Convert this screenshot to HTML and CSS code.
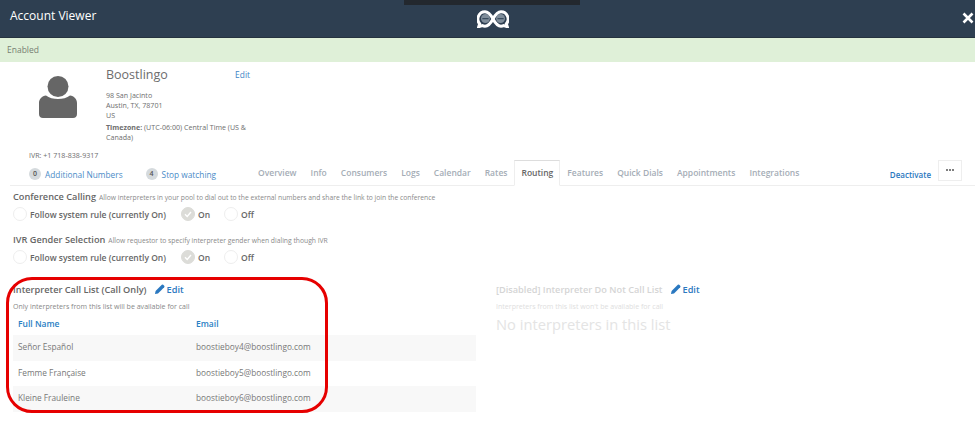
FILE: index.html
```html
<!DOCTYPE html>
<html lang="en">
<head>
<meta charset="utf-8">
<title>Account Viewer</title>
<link rel="stylesheet" href="styles.css">
</head>
<body>
<div class="blackbar"></div>
<header class="topbar">
  <div class="title">Account Viewer</div>
  <svg class="logo" viewBox="0 1 36 20" width="32" height="18" preserveAspectRatio="none" aria-hidden="true">
    <circle cx="9.500" cy="10.500" r="5" fill="#7f8d9a"/>
    <circle cx="26.500" cy="10.500" r="5" fill="#7f8d9a"/>
    <path d="M6 10.500h7M23 10.500h7" stroke="#3b4d5e" stroke-width="1.300"/>
    <path d="M18 11C15 5.500 12.500 3 9 3a8 8 0 0 0-6 13.300L2 19.500l4-1.200C7 18.800 8 19 9 19c3.500 0 6-2.500 9-8s5.500-8 9-8a8 8 0 0 1 6 13.300l1 3.200-4-1.200c-1 .5-2 .7-3 .7-3.500 0-6-2.500-9-8z" fill="none" stroke="#fff" stroke-width="3.400"/>
  </svg>
  <svg class="close" viewBox="0 0 12 12" width="12" height="12" aria-hidden="true"><path d="M1.500 1.500l9 9M10.500 1.500l-9 9" stroke="#fff" stroke-width="2.600"/></svg>
</header>
<div class="status">Enabled</div>
<section class="profile">
  <svg class="avatar" viewBox="0 0 38 42" width="38" height="42" aria-hidden="true">
    <circle cx="19" cy="10.500" r="10.500" fill="#666"/>
    <path d="M7 19.500c3 2.500 7.500 3.500 12 3.500s9-1 12-3.500c4 .5 7 3.500 7 7.500v11c0 2.500-1.500 4-4 4H4c-2.500 0-4-1.500-4-4V27c0-4 3-7 7-7.500z" fill="#666"/>
  </svg>
  <div class="details">
    <div class="name-row"><h1 class="name">Boostlingo</h1><a class="edit-small">Edit</a></div>
    <address class="address">98 San Jacinto<br>Austin, TX, 78701<br>US</address>
    <p class="timezone"><b>Timezone:</b> (UTC-06:00) Central Time (US &amp; Canada)</p>
  </div>
</section>
<div class="ivr">IVR: +1 718-838-9317</div>
<nav class="navrow">
  <div class="links">
    <a class="count-link"><span class="badge">0</span>Additional Numbers</a>
    <a class="count-link"><span class="badge">4</span>Stop watching</a>
  </div>
  <div class="tabs">
    <span class="tab">Overview</span><span class="tab">Info</span><span class="tab">Consumers</span><span class="tab">Logs</span><span class="tab">Calendar</span><span class="tab">Rates</span><span class="tab active">Routing</span><span class="tab">Features</span><span class="tab">Quick Dials</span><span class="tab">Appointments</span><span class="tab">Integrations</span>
  </div>
  <div class="actions"><a class="deactivate">Deactivate</a><span class="more"><svg viewBox="0 0 8 2" width="8" height="2" aria-hidden="true"><circle cx="1" cy="1" r="1" fill="#555"/><circle cx="4" cy="1" r="1" fill="#555"/><circle cx="7" cy="1" r="1" fill="#555"/></svg></span></div>
</nav>
<main class="content">
  <section class="setting">
    <div class="setting-head"><h2>Conference Calling</h2><span>Allow interpreters in your pool to dial out to the external numbers and share the link to join the conference</span></div>
    <div class="options">
      <label class="opt opt-rule"><i class="radio"></i>Follow system rule (currently On)</label>
      <label class="opt opt-on"><i class="radio checked"><svg viewBox="0 0 10 10" width="10" height="10"><path d="M2 5.200l2.200 2.200L8 3" fill="none" stroke="#fff" stroke-width="1.400"/></svg></i>On</label>
      <label class="opt"><i class="radio"></i>Off</label>
    </div>
  </section>
  <section class="setting second">
    <div class="setting-head"><h2>IVR Gender Selection</h2><span>Allow requestor to specify interpreter gender when dialing though IVR</span></div>
    <div class="options">
      <label class="opt opt-rule"><i class="radio"></i>Follow system rule (currently On)</label>
      <label class="opt opt-on"><i class="radio checked"><svg viewBox="0 0 10 10" width="10" height="10"><path d="M2 5.200l2.200 2.200L8 3" fill="none" stroke="#fff" stroke-width="1.400"/></svg></i>On</label>
      <label class="opt"><i class="radio"></i>Off</label>
    </div>
  </section>
  <div class="lists">
    <section class="list-call">
      <div class="highlight"></div>
      <div class="list-head"><h3>Interpreter Call List (Call Only)</h3><a class="edit"><svg viewBox="0 0 10 10" width="10" height="10"><path d="M0 10l.6-3L6.800.800a1 1 0 0 1 1.400 0l1 1a1 1 0 0 1 0 1.400L3 9.400z" fill="#2a78c0"/></svg>Edit</a></div>
      <p class="hint">Only interpreters from this list will be available for call</p>
      <table>
        <thead><tr><th class="col-name">Full Name</th><th>Email</th></tr></thead>
        <tbody>
          <tr><td>Señor Español</td><td>boostieboy4@boostlingo.com</td></tr>
          <tr><td>Femme Française</td><td>boostieboy5@boostlingo.com</td></tr>
          <tr><td>Kleine Frauleine</td><td>boostieboy6@boostlingo.com</td></tr>
        </tbody>
      </table>
    </section>
    <section class="list-disabled">
      <div class="list-head"><h3>[Disabled] Interpreter Do Not Call List</h3><a class="edit"><svg viewBox="0 0 10 10" width="10" height="10"><path d="M0 10l.6-3L6.800.800a1 1 0 0 1 1.400 0l1 1a1 1 0 0 1 0 1.400L3 9.400z" fill="#2a78c0"/></svg>Edit</a></div>
      <p class="hint">Interpreters from this list won't be available for call</p>
      <p class="empty">No interpreters in this list</p>
    </section>
  </div>
</main>
</body>
</html>
```
FILE: styles.css
```css
* { box-sizing: border-box; }
html, body { margin: 0; padding: 0; }
body {
  position: relative;
  width: 975px;
  height: 425px;
  overflow: hidden;
  background: #fff;
  font-family: "Open Sans", sans-serif;
  color: #666;
}
a { color: #3d85c6; }
.blackbar {
  position: absolute;
  left: 404px;
  top: 0;
  width: 176px;
  height: 5px;
  background: #23282e;
}
.topbar {
  display: grid;
  grid-template-columns: 1fr auto 1fr;
  align-items: center;
  height: 38px;
  padding: 0 0 0 10px;
  background: #2e3f51;
  border-bottom: 1px solid #26333f;
}
.title { color: #fff; font-size: 12px; font-weight: 500; line-height: 30px; margin-top: -6px; }
.logo { margin-top: 0; }
.close { justify-self: end; margin: -1px 0 0; transform: translateX(-1px); }
.status {
  height: 24px;
  padding-left: 7px;
  background: #dff0d8;
  color: #777f72;
  font-size: 8.500px;
  line-height: 24px;
}
.profile { display: flex; height: 84px; padding-left: 39px; }
.avatar { margin-top: 14px; flex: none; }
.details { width: 146px; margin-left: 29px; padding-top: 4px; }
.name-row { display: flex; justify-content: space-between; align-items: center; height: 16px; }
.name { margin: 0; font-size: 12.500px; font-weight: 500; color: #6d6d6d; }
.edit-small { font-size: 8.400px; margin-right: 2px; }
.address { margin-top: 8px; font-style: normal; font-size: 7.100px; line-height: 10px; color: #6e6e6e; }
.timezone { margin: 2px 0 0; font-size: 7.100px; line-height: 10px; color: #6e6e6e; }
.timezone b { font-weight: 700; }
.ivr { height: 11px; margin-top: 4px; padding-left: 29px; font-size: 7.100px; line-height: 11px; color: #6e6e6e; }
.navrow {
  display: flex;
  align-items: stretch;
  height: 25px;
  margin: 0 0 0 10px;
  padding-left: 19px;
  border-bottom: 1px solid #eee;
}
.links { display: flex; flex: none; width: 222px; gap: 23px; align-items: center; padding-top: 2px; }
.count-link { display: flex; align-items: center; font-size: 8.300px; color: #4a8bc7; white-space: nowrap; }
.badge {
  display: block;
  width: 12px;
  height: 12px;
  margin-right: 4px;
  border-radius: 50%;
  background: #d5dadd;
  color: #555;
  font-size: 7px;
  font-weight: 600;
  line-height: 12px;
  text-align: center;
}
.tabs { display: flex; align-items: stretch; }
.tab { padding: 4px 7px 0; font-size: 8.500px; font-weight: 600; color: #a5adb6; line-height: 16px; }
.tab.active {
  margin: -1px 0 -1px;
  padding: 4px 6px 0;
  background: #fff;
  color: #666;
  border: 1px solid #eee;
  border-bottom: 1px solid #fff;
  border-top-color: #ddd;
}
.actions { display: flex; flex: none; align-items: flex-start; margin-left: auto; padding-right: 13px; }
.deactivate { font-size: 8px; font-weight: 600; line-height: 11px; color: #2a78c0; margin: 8px 7px 0 0; }
.more {
  display: flex;
  flex: none;
  align-items: center;
  justify-content: center;
  width: 24px;
  height: 21px;
  margin-top: -1px;
  padding-bottom: 2px;
  border: 1px solid #eee;
}
.content { padding: 5px 0 0 13px; }
.setting-head { display: flex; align-items: baseline; gap: 3px; height: 12px; line-height: 12px; }
.setting-head h2 { margin: 0; font-size: 9.200px; font-weight: 600; color: #666; }
.setting-head span { font-size: 6.750px; color: #8a8a8a; }
.setting.second { margin-top: 13px; }
.options { display: flex; align-items: center; height: 14px; margin-top: 4px; }
.opt { display: flex; align-items: center; font-size: 8.500px; font-weight: 600; color: #666; }
.opt-rule { width: 168px; }
.opt-on { width: 43px; }
.radio {
  display: flex;
  align-items: center;
  justify-content: center;
  width: 14px;
  height: 14px;
  margin-right: 3px;
  border: 1px solid #eee;
  border-radius: 50%;
  flex: none;
}
.radio.checked { background: #dcdcd8; border-color: #dcdcd8; }
.lists { display: flex; margin-top: 19px; }
.list-call { position: relative; width: 463px; flex: none; }
.highlight {
  position: absolute;
  left: -7px;
  top: -6px;
  width: 322px;
  height: 136px;
  border: 3px solid #e60000;
  border-radius: 26px;
  pointer-events: none;
}
.list-head { display: flex; align-items: center; height: 12px; gap: 8px; }
.list-head h3 { margin: 0; font-size: 9.200px; font-weight: 600; color: #666; }
.edit { display: flex; align-items: center; gap: 2px; font-size: 9.200px; font-weight: 600; color: #2a78c0; }
.hint { margin: 5px 0 0; font-size: 7.050px; line-height: 12px; color: #888; }
table { width: 100%; margin-top: 1px; border-collapse: collapse; table-layout: fixed; }
th { height: 22px; padding: 0 0 2px 5px; text-align: left; font-size: 8.500px; font-weight: 600; color: #2a80c4; }
.col-name { width: 178px; }
td { height: 25.600px; padding: 0 0 2px 5px; font-size: 8.300px; color: #777; }
tbody tr:nth-child(odd) { background: #f8f8f8; }
.list-disabled { padding-left: 20px; }
.list-disabled h3 { color: #d5d5d5; }
.list-disabled .hint { color: #dedede; }
.empty { margin: 2px 0 0; font-size: 14.700px; line-height: 20px; color: #e4e4e4; }
```
